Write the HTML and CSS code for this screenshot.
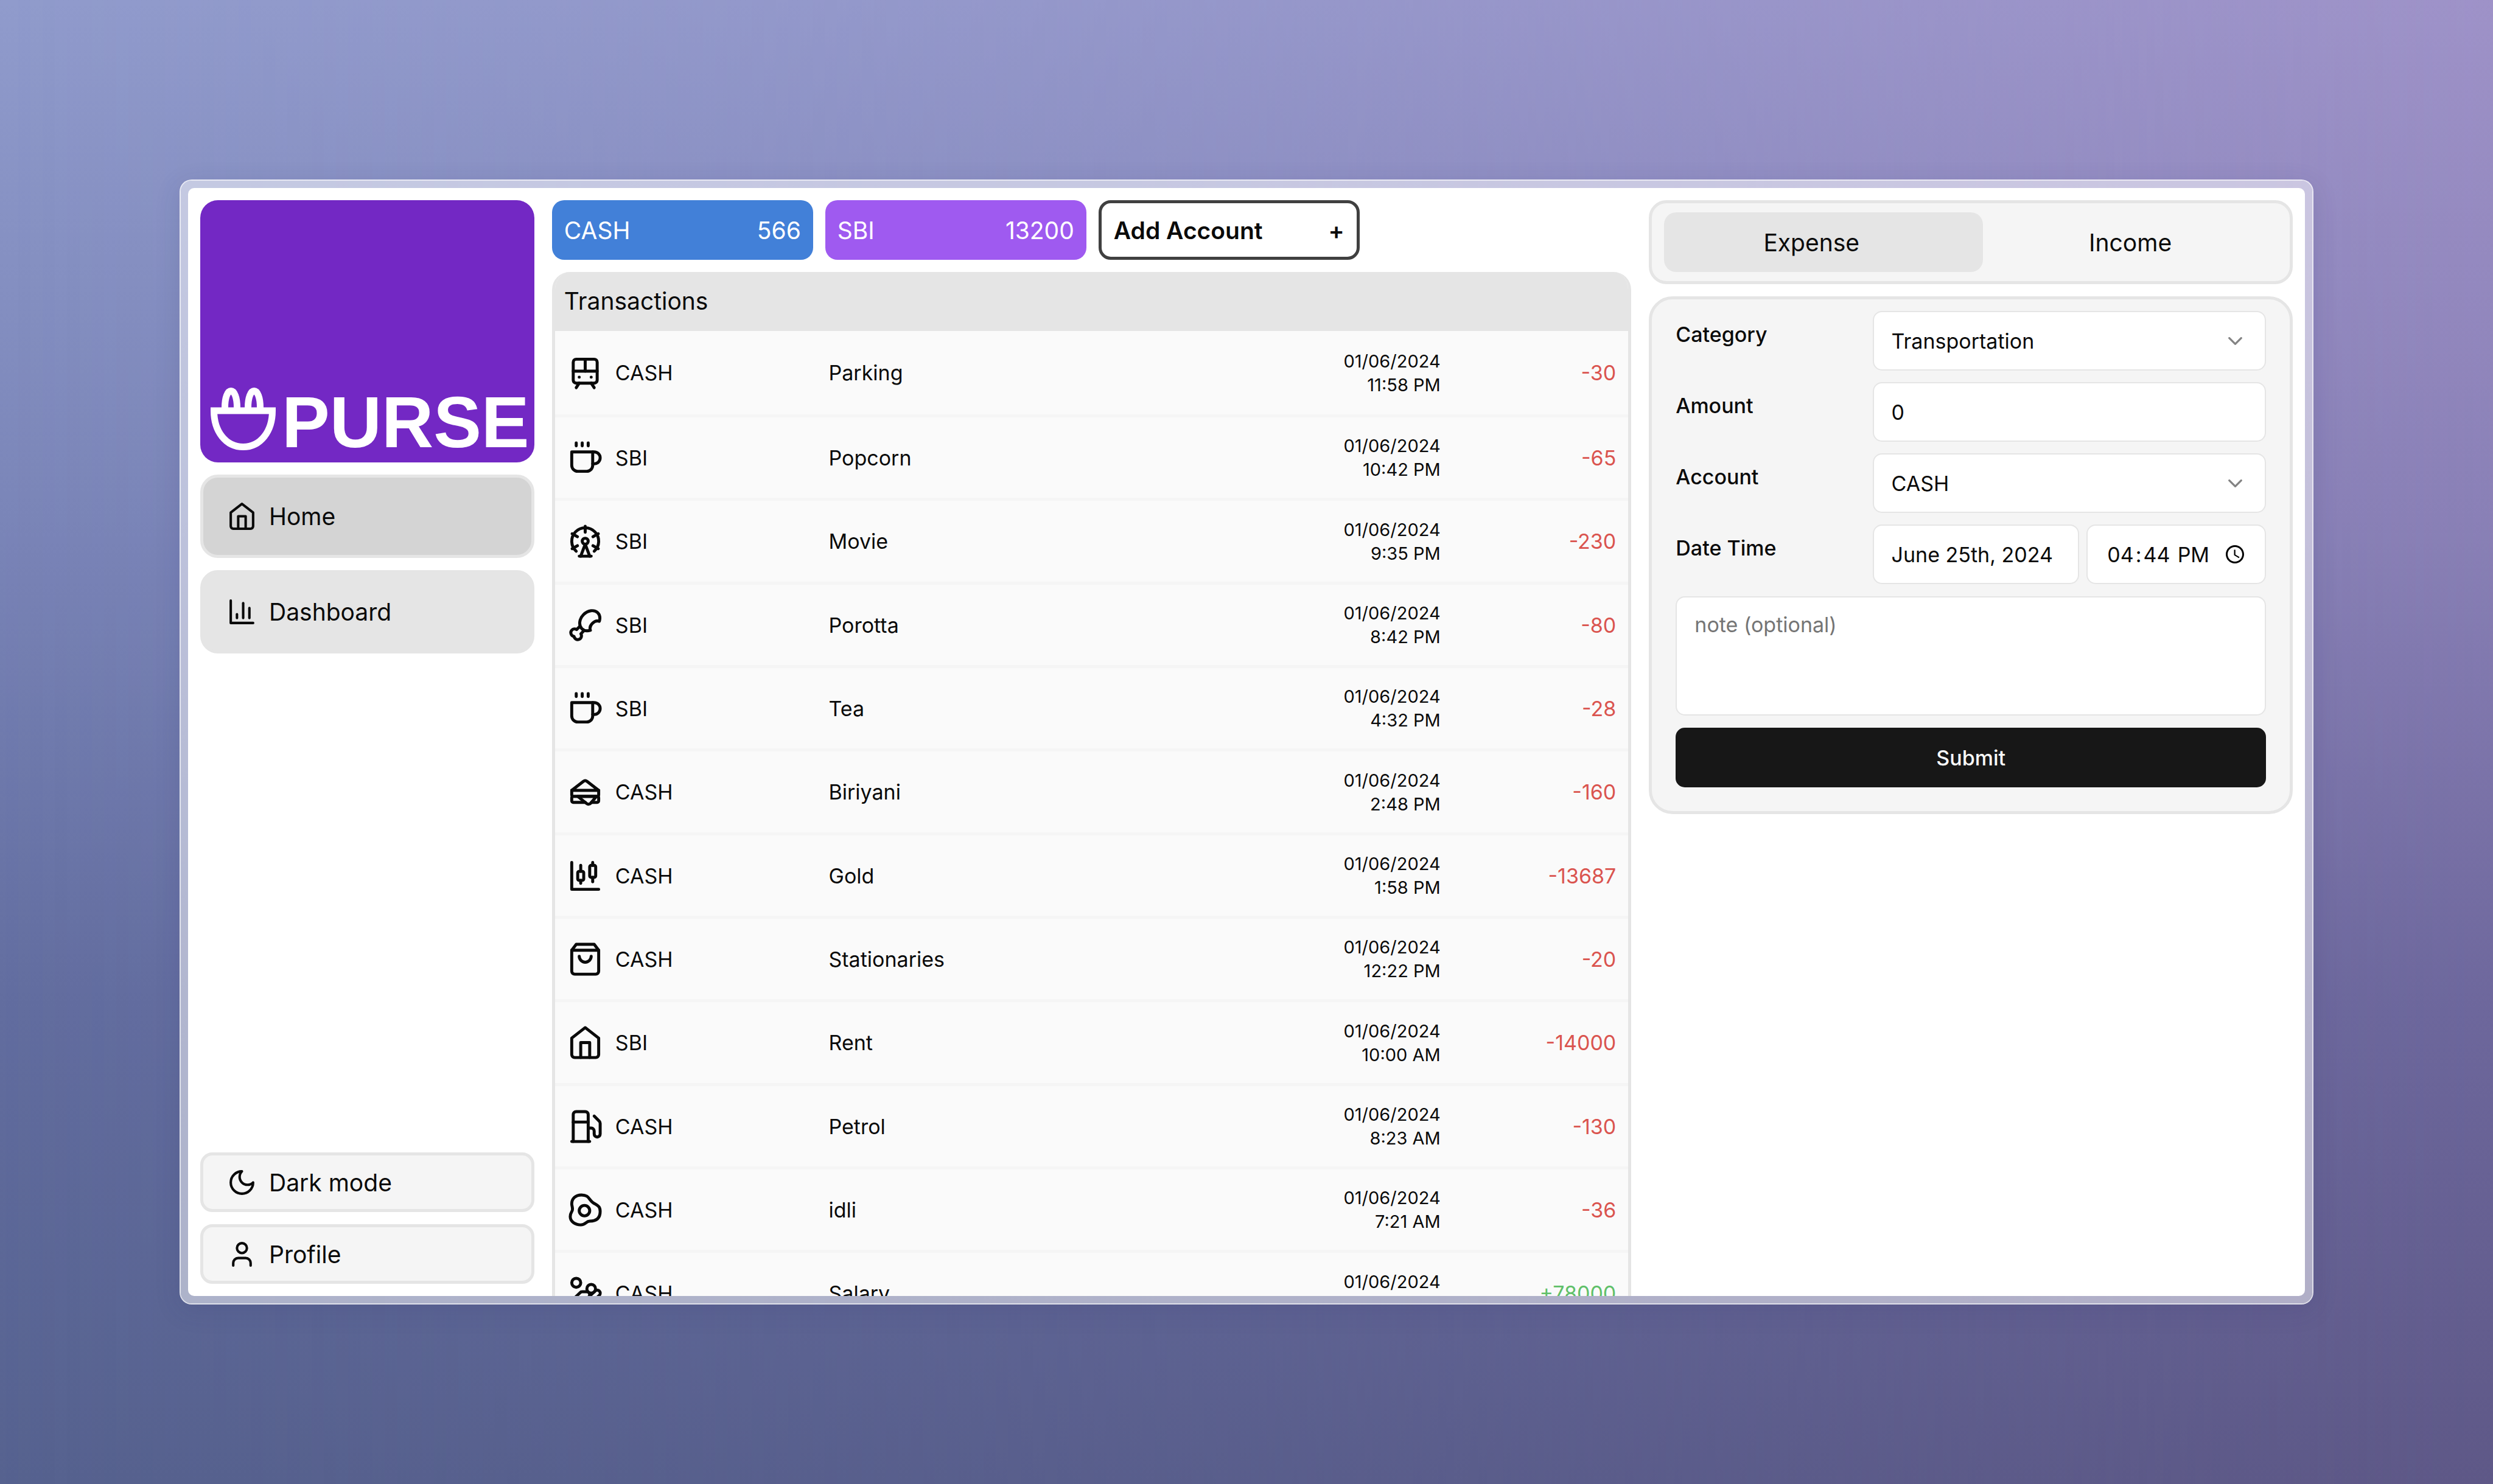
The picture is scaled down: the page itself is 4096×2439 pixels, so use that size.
FILE: index.html
```html
<!DOCTYPE html>
<html lang="en">
<head>
<meta charset="utf-8">
<title>Purse</title>
<link rel="stylesheet" href="styles.css">
</head>
<body>
<svg class="sprite" aria-hidden="true">
  <symbol id="i-home" viewBox="0 0 24 24"><path d="m3 9 9-7 9 7v11a2 2 0 0 1-2 2H5a2 2 0 0 1-2-2z"/><path d="M9 22V12h6v10"/></symbol>
  <symbol id="i-chart" viewBox="0 0 24 24"><path d="M3 3v18h18"/><path d="M18 17V9"/><path d="M13 17V5"/><path d="M8 17v-3"/></symbol>
  <symbol id="i-moon" viewBox="0 0 24 24"><path d="M12 3a6 6 0 0 0 9 9 9 9 0 1 1-9-9Z"/></symbol>
  <symbol id="i-user" viewBox="0 0 24 24"><path d="M19 21v-2a4 4 0 0 0-4-4H9a4 4 0 0 0-4 4v2"/><circle cx="12" cy="7" r="4"/></symbol>
  <symbol id="i-tram" viewBox="0 0 24 24"><rect width="16" height="16" x="4" y="3" rx="2"/><path d="M4 11h16"/><path d="M12 3v8"/><path d="m8 19-2 3"/><path d="m18 22-2-3"/><path d="M8 15h.01"/><path d="M16 15h.01"/></symbol>
  <symbol id="i-coffee" viewBox="0 0 24 24"><path d="M17 8h1a4 4 0 1 1 0 8h-1"/><path d="M3 8h14v9a4 4 0 0 1-4 4H7a4 4 0 0 1-4-4Z"/><path d="M6 2v2"/><path d="M10 2v2"/><path d="M14 2v2"/></symbol>
  <symbol id="i-wheel" viewBox="0 0 24 24"><circle cx="12" cy="12" r="2"/><path d="M12 2v4"/><path d="m6.8 15-3.5 2"/><path d="m20.7 7-3.5 2"/><path d="M6.8 9 3.3 7"/><path d="m20.7 17-3.5-2"/><path d="m9 22 3-8 3 8"/><path d="M8 22h8"/><path d="M18 18.7a9 9 0 1 0-12 0"/></symbol>
  <symbol id="i-drumstick" viewBox="0 0 24 24"><path d="M15.45 15.4c-2.13.65-4.3.32-5.7-1.1-2.29-2.27-1.76-6.5 1.17-9.42 2.93-2.93 7.15-3.46 9.43-1.18 1.41 1.41 1.74 3.57 1.1 5.71-1.4-.51-3.26-.02-4.64 1.36-1.38 1.38-1.87 3.23-1.36 4.63z"/><path d="m11.25 15.6-2.16 2.16a2.5 2.5 0 1 1-4.56 1.73 2.49 2.49 0 0 1-1.41-4.24 2.5 2.5 0 0 1 3.14-.32l2.16-2.16"/></symbol>
  <symbol id="i-sandwich" viewBox="0 0 24 24"><path d="M3 11v3a1 1 0 0 0 1 1h16a1 1 0 0 0 1-1v-3"/><path d="M12 19H4a1 1 0 0 1-1-1v-2a1 1 0 0 1 1-1h16a1 1 0 0 1 1 1v2a1 1 0 0 1-1 1h-3.83"/><path d="m3 11 7.77-6.04a2 2 0 0 1 2.46 0L21 11H3Z"/><path d="M12.97 19.77 7 15h12.5l-3.75 4.5a2 2 0 0 1-2.78.27Z"/></symbol>
  <symbol id="i-candles" viewBox="0 0 24 24"><path d="M9 5v4"/><rect width="4" height="6" x="7" y="9" rx="1"/><path d="M9 15v2"/><path d="M17 3v2"/><rect width="4" height="8" x="15" y="5" rx="1"/><path d="M17 13v3"/><path d="M3 3v18h18"/></symbol>
  <symbol id="i-bag" viewBox="0 0 24 24"><path d="M6 2 3 6v14a2 2 0 0 0 2 2h14a2 2 0 0 0 2-2V6l-3-4Z"/><path d="M3 6h18"/><path d="M16 10a4 4 0 0 1-8 0"/></symbol>
  <symbol id="i-fuel" viewBox="0 0 24 24"><path d="M3 22h12"/><path d="M4 9h10"/><path d="M14 22V4a2 2 0 0 0-2-2H6a2 2 0 0 0-2 2v18"/><path d="M14 13h2a2 2 0 0 1 2 2v2a2 2 0 0 0 4 0V9.83a2 2 0 0 0-.59-1.42L18 5"/></symbol>
  <symbol id="i-egg" viewBox="0 0 24 24"><circle cx="11.5" cy="12.5" r="3.5"/><path d="M3 8c0-3.5 2.5-6 6.5-6 5 0 4.83 3 7.5 5s5 2 5 6c0 4.5-2.5 6.5-7 6.5-2.5 0-2.5 2.5-6 2.5s-7-2-7-5.5c0-3 1.5-3 1.5-5C3.5 10 3 9 3 8Z"/></symbol>
  <symbol id="i-coins" viewBox="0 0 24 24"><path d="M11 15h2a2 2 0 1 0 0-4h-3c-.6 0-1.1.2-1.4.6L3 17"/><path d="m7 21 1.6-1.4c.3-.4.8-.6 1.4-.6h4c1.1 0 2.1-.4 2.8-1.2l4.6-4.4a2 2 0 0 0-2.75-2.91l-4.2 3.9"/><path d="m2 16 6 6"/><circle cx="16" cy="9" r="2.9"/><circle cx="6" cy="5" r="3"/></symbol>
  <symbol id="i-chevron" viewBox="0 0 24 24"><path d="m6 9 6 6 6-6"/></symbol>
</svg>

<div class="frame">
  <div class="window">
    <aside class="sidebar">
      <div class="brand">
        <svg class="brand-mark" viewBox="0 0 107 103" aria-hidden="true"><path d="M5.500 38H101.500C101.500 72 82 97.500 53.500 97.500S5.500 72 5.500 38Z"/><path d="M23.500 38V33C23.500 16 28 5.500 33.500 5.500S43.500 16 43.500 33V38"/><path d="M61.500 38V33C61.500 16 66 5.500 71.500 5.500S81.500 16 81.500 33V38"/></svg>
        <span class="brand-name">PURSE</span>
      </div>
      <nav class="nav">
        <a class="nav-item active" href="#home"><svg class="icon"><use href="#i-home"/></svg>Home</a>
        <a class="nav-item" href="#dashboard"><svg class="icon"><use href="#i-chart"/></svg>Dashboard</a>
      </nav>
      <div class="side-foot">
        <button class="side-button" type="button"><svg class="icon"><use href="#i-moon"/></svg>Dark mode</button>
        <button class="side-button" type="button"><svg class="icon"><use href="#i-user"/></svg>Profile</button>
      </div>
    </aside>

    <main class="main">
      <div class="accounts">
        <button class="account blue" type="button"><span>CASH</span><span>566</span></button>
        <button class="account purple" type="button"><span>SBI</span><span>13200</span></button>
        <button class="account add" type="button"><span>Add Account</span><span>+</span></button>
      </div>
      <section class="transactions">
        <h2 class="transactions-title">Transactions</h2>
        <table class="table">
          <colgroup><col class="col-account"><col><col class="col-date"><col class="col-amount"></colgroup>
          <tbody>
            <tr><td><span class="source"><svg class="icon large"><use href="#i-tram"/></svg>CASH</span></td><td>Parking</td><td class="date">01/06/2024<br>11:58 PM</td><td class="amount">-30</td></tr>
            <tr><td><span class="source"><svg class="icon large"><use href="#i-coffee"/></svg>SBI</span></td><td>Popcorn</td><td class="date">01/06/2024<br>10:42 PM</td><td class="amount">-65</td></tr>
            <tr><td><span class="source"><svg class="icon large"><use href="#i-wheel"/></svg>SBI</span></td><td>Movie</td><td class="date">01/06/2024<br>9:35 PM</td><td class="amount">-230</td></tr>
            <tr><td><span class="source"><svg class="icon large"><use href="#i-drumstick"/></svg>SBI</span></td><td>Porotta</td><td class="date">01/06/2024<br>8:42 PM</td><td class="amount">-80</td></tr>
            <tr><td><span class="source"><svg class="icon large"><use href="#i-coffee"/></svg>SBI</span></td><td>Tea</td><td class="date">01/06/2024<br>4:32 PM</td><td class="amount">-28</td></tr>
            <tr><td><span class="source"><svg class="icon large"><use href="#i-sandwich"/></svg>CASH</span></td><td>Biriyani</td><td class="date">01/06/2024<br>2:48 PM</td><td class="amount">-160</td></tr>
            <tr><td><span class="source"><svg class="icon large"><use href="#i-candles"/></svg>CASH</span></td><td>Gold</td><td class="date">01/06/2024<br>1:58 PM</td><td class="amount">-13687</td></tr>
            <tr><td><span class="source"><svg class="icon large"><use href="#i-bag"/></svg>CASH</span></td><td>Stationaries</td><td class="date">01/06/2024<br>12:22 PM</td><td class="amount">-20</td></tr>
            <tr><td><span class="source"><svg class="icon large"><use href="#i-home"/></svg>SBI</span></td><td>Rent</td><td class="date">01/06/2024<br>10:00 AM</td><td class="amount">-14000</td></tr>
            <tr><td><span class="source"><svg class="icon large"><use href="#i-fuel"/></svg>CASH</span></td><td>Petrol</td><td class="date">01/06/2024<br>8:23 AM</td><td class="amount">-130</td></tr>
            <tr><td><span class="source"><svg class="icon large"><use href="#i-egg"/></svg>CASH</span></td><td>idli</td><td class="date">01/06/2024<br>7:21 AM</td><td class="amount">-36</td></tr>
            <tr><td><span class="source"><svg class="icon large"><use href="#i-coins"/></svg>CASH</span></td><td>Salary</td><td class="date">01/06/2024<br>&nbsp;</td><td class="amount credit">+78000</td></tr>
          </tbody>
        </table>
      </section>
    </main>

    <aside class="entry">
      <div class="tabs" role="tablist">
        <button class="tab selected" type="button" role="tab" aria-selected="true">Expense</button>
        <button class="tab" type="button" role="tab" aria-selected="false">Income</button>
      </div>
      <form class="form">
        <div class="fields">
          <div class="field">
            <label for="category">Category</label>
            <div class="select"><select class="control" id="category"><option>Transportation</option></select><svg class="icon chevron"><use href="#i-chevron"/></svg></div>
          </div>
          <div class="field">
            <label for="amount">Amount</label>
            <input class="control" id="amount" type="text" inputmode="decimal" value="0">
          </div>
          <div class="field">
            <label for="account">Account</label>
            <div class="select"><select class="control" id="account"><option>CASH</option></select><svg class="icon chevron"><use href="#i-chevron"/></svg></div>
          </div>
          <div class="field">
            <label for="date">Date Time</label>
            <div class="when">
              <button class="control" id="date" type="button">June 25th, 2024</button>
              <input class="control time" type="time" value="16:44" aria-label="Time">
            </div>
          </div>
        </div>
        <textarea class="control note" placeholder="note (optional)" aria-label="Note"></textarea>
        <button class="submit" type="submit">Submit</button>
      </form>
    </aside>
  </div>
</div>
</body>
</html>
```
FILE: styles.css
```css
*,
*::before,
*::after {
  box-sizing: border-box;
}

body {
  margin: 0;
  height: 100vh;
  padding: 295px;
  overflow: hidden;
  position: relative;
  background: linear-gradient(to bottom, #909bcc, #7a85b8 35%, #626d9f 68%, #56628f);
  color: #0a0a0a;
  font: 400 39px/59px Inter, "Liberation Sans", sans-serif;
}

/* right-hand tint, faded in from the left edge */
body::before {
  content: "";
  position: absolute;
  inset: 0;
  background: linear-gradient(to bottom, #9e92c8, #8a80b6 35%, #6d679c 68%, #5e5887);
  mask-image: linear-gradient(to right, transparent, rgba(0, 0, 0, 0.4) 50%, #000);
}

button,
input,
select,
textarea {
  font: inherit;
  color: inherit;
  margin: 0;
}

a {
  color: inherit;
  text-decoration: none;
}

.sprite {
  position: absolute;
  width: 0;
  height: 0;
}

.icon {
  flex: none;
  width: 49px;
  height: 49px;
  fill: none;
  stroke: currentColor;
  stroke-width: 2;
  stroke-linecap: round;
  stroke-linejoin: round;
}

.icon.large {
  width: 59px;
  height: 59px;
}

.frame {
  position: relative;
  height: 100%;
  padding: 12px;
  border: 2px solid rgba(255, 255, 255, 0.8);
  border-radius: 20px;
  background: rgba(255, 255, 255, 0.5);
  background-clip: padding-box;
  box-shadow: 0 10px 40px rgba(50, 50, 110, 0.15);
}

.window {
  height: 100%;
  display: grid;
  grid-template-columns: minmax(0, 549fr) minmax(0, 1774fr) minmax(0, 1058fr);
  grid-template-rows: 100%;
  gap: 29px;
  padding: 20px 20px 0;
  border-radius: 10px;
  background: #fff;
  overflow: hidden;
}

/* sidebar */
.sidebar {
  display: flex;
  flex-direction: column;
  gap: 20px;
  padding-bottom: 20px;
}

.brand {
  height: 431px;
  flex: none;
  display: flex;
  align-items: flex-end;
  gap: 10px;
  padding: 0 17px 20px;
  border-radius: 29px;
  background: #7328c4;
  color: #fff;
}

.brand-mark {
  flex: none;
  width: 107px;
  height: 103px;
  fill: none;
  stroke: currentColor;
  stroke-width: 11;
}

.brand-name {
  font: 700 118px/92px "Liberation Sans", Arial, sans-serif;
}

.nav {
  display: flex;
  flex-direction: column;
  gap: 20px;
}

.nav-item {
  height: 137px;
  display: flex;
  align-items: center;
  gap: 20px;
  padding: 0 39px;
  border: 5px solid #e5e5e5;
  border-radius: 29px;
  background: #e5e5e5;
}

.nav-item.active {
  background: #d4d4d4;
}

.side-foot {
  display: flex;
  flex-direction: column;
  gap: 20px;
  margin-top: auto;
}

.side-button {
  height: 98px;
  display: flex;
  align-items: center;
  gap: 20px;
  padding: 0 39px;
  border: 5px solid #e5e5e5;
  border-radius: 20px;
  background: #f5f5f5;
}

/* accounts and transactions */
.main {
  display: flex;
  flex-direction: column;
  gap: 20px;
}

.accounts {
  display: flex;
  gap: 20px;
}

.account {
  width: 429px;
  height: 98px;
  display: flex;
  align-items: center;
  justify-content: space-between;
  padding: 0 20px;
  border: 0;
  border-radius: 20px;
  color: #fff;
}

.account.blue {
  background: #4280d8;
}

.account.purple {
  background: #9f5af0;
}

.account.add {
  border: 5px solid #404040;
  background: #fff;
  color: #0a0a0a;
  font-weight: 600;
}

.transactions {
  flex: 1;
  min-height: 0;
  overflow: hidden;
  border: 5px solid #e5e5e5;
  border-width: 0 5px;
  border-radius: 29px 29px 0 0;
  background: #fafafa;
}

.transactions-title {
  margin: 0;
  padding: 18px 15px 20px;
  background: #e5e5e5;
  font: inherit;
}

.table {
  width: 100%;
  table-layout: fixed;
  border-collapse: separate;
  border-spacing: 0;
  font-size: 34px;
  line-height: 49px;
}

.col-account {
  width: 25.5%;
}

.col-date {
  width: 24%;
}

.col-amount {
  width: 17.5%;
}

.table tr {
  height: 137px;
}

.table tr:first-child {
  height: 142px;
}

.table tr:nth-child(3n) {
  height: 138px;
}

.table td {
  padding: 0;
  border-bottom: 5px solid #f5f5f5;
}

.table td:first-child {
  padding-left: 20px;
}

.source {
  display: flex;
  align-items: center;
  gap: 20px;
}

.table .date {
  text-align: right;
  font-size: 29px;
  line-height: 39px;
}

.table .amount {
  padding-right: 20px;
  text-align: right;
  color: #da544f;
}

.table .amount.credit {
  color: #5fc069;
}

/* entry form */
.entry {
  display: flex;
  flex-direction: column;
  gap: 20px;
}

.tabs {
  position: relative;
  display: grid;
  grid-template-columns: 1fr 1fr;
  padding: 15px 0;
  border: 5px solid #e5e5e5;
  border-radius: 29px;
  background: #f5f5f5;
}

/* highlight behind the chosen tab */
.tabs::before {
  content: "";
  position: absolute;
  top: 15px;
  bottom: 15px;
  left: 20px;
  width: 50%;
  border-radius: 20px;
  background: #e5e5e5;
}

.tab {
  position: relative;
  height: 98px;
  border: 0;
  background: none;
}

.form {
  display: flex;
  flex-direction: column;
  gap: 20px;
  padding: 19px 39px 39px;
  border: 5px solid #e5e5e5;
  border-radius: 39px;
  background: #f5f5f5;
  font-size: 34px;
  line-height: 49px;
}

.fields {
  display: grid;
  gap: 19px;
}

.field {
  display: grid;
  grid-template-columns: 1fr 2fr;
  align-items: start;
}

.field label {
  padding-top: 14px;
  font-weight: 500;
}

.control {
  width: 100%;
  height: 98px;
  padding: 0 29px;
  border: 2px solid #e5e5e5;
  border-radius: 15px;
  background: #fff;
  text-align: left;
  appearance: none;
}

.select {
  display: grid;
  align-items: center;
}

.select > * {
  grid-area: 1 / 1;
}

.icon.chevron {
  justify-self: end;
  width: 39px;
  height: 39px;
  margin-right: 31px;
  pointer-events: none;
  opacity: 0.5;
}

.when {
  display: grid;
  grid-template-columns: 339fr 294fr;
  gap: 12px;
}

.time::-webkit-datetime-edit-hour-field,
.time::-webkit-datetime-edit-minute-field,
.time::-webkit-datetime-edit-ampm-field {
  padding: 0 3px;
}

.time::-webkit-datetime-edit {
  flex: 1;
}

.time::-webkit-calendar-picker-indicator {
  width: 36px;
  height: 36px;
  margin: 0 2px 0 0;
  padding: 0;
}

.control.note {
  display: block;
  height: 196px;
  padding: 20px 29px;
  resize: none;
}

.note::placeholder {
  color: #757575;
}

.submit {
  height: 98px;
  border: 0;
  border-radius: 15px;
  background: #171717;
  color: #fafafa;
  font-weight: 500;
}
```
